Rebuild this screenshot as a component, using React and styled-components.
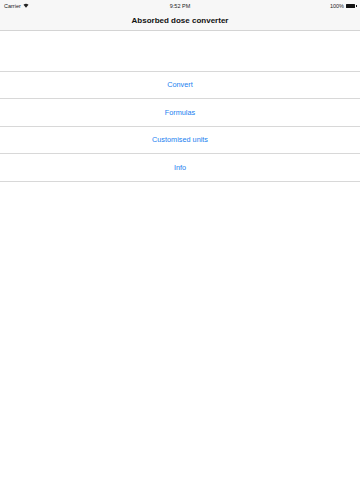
import React from "react";
import styled, { createGlobalStyle } from "styled-components";

const Global = createGlobalStyle`
html, body {
  margin: 0;
  padding: 0;
  background: #fff;
  font-family: "Liberation Sans", Arial, sans-serif;
}
`

const Page = styled.div`
width: 360px;
height: 480px;
background: #fff;
display: flex;
flex-direction: column;
`

const Header = styled.header`
background: #f7f7f7;
border-bottom: 1px solid #d4d4d4;
`

const StatusBar = styled.div`
height: 11px;
display: grid;
grid-template-columns: 1fr auto 1fr;
align-items: center;
padding: 0 4px;
font-size: 5.5px;
color: #222;
`

const Left = styled.div`
display: flex;
align-items: center;
gap: 2px;
`

const Right = styled.div`
display: flex;
align-items: center;
justify-content: flex-end;
gap: 2px;
`

const Battery = styled.span`
display: inline-block;
width: 9px;
height: 4px;
background: #111;
border-radius: 0.5px;
position: relative;
margin-right: 1px;
&::after {
  content: "";
  position: absolute;
  right: -1.5px;
  top: 1px;
  width: 1px;
  height: 2px;
  background: #111;
}
`

const Title = styled.h1`
margin: 0;
height: 19px;
display: flex;
align-items: center;
justify-content: center;
font-size: 8px;
font-weight: 700;
color: #111;
`

const Spacer = styled.div`
height: 39.5px;
`

const List = styled.div`
display: flex;
flex-direction: column;
border-top: 1px solid #d8d8d8;
`

const Row = styled.div`
height: 26.5px;
display: flex;
align-items: center;
justify-content: center;
border-bottom: 1px solid #d8d8d8;
font-size: 7.3px;
color: #1a80f0;
`

const Wifi = () => (
  <svg width="6" height="5" viewBox="0 0 12 10">
    <path d="M6 9.5 L1 3.5 A8 8 0 0 1 11 3.5 Z" fill="#222" />
  </svg>
)

const items = ["Convert", "Formulas", "Customised units", "Info"]

export default function App() {
  return (
    <Page>
      <Global />
      <Header>
        <StatusBar>
          <Left>Carrier <Wifi /></Left>
          <span>9:52 PM</span>
          <Right>100% <Battery /></Right>
        </StatusBar>
        <Title>Absorbed dose converter</Title>
      </Header>
      <Spacer />
      <List>
        {items.map(t => <Row key={t}>{t}</Row>)}
      </List>
    </Page>
  );
}
